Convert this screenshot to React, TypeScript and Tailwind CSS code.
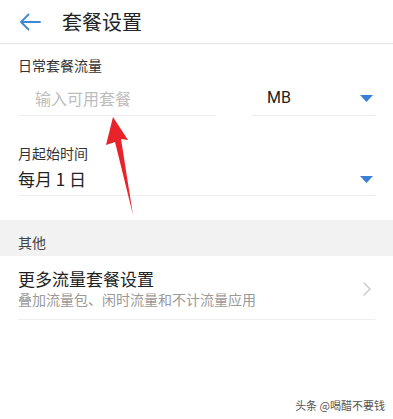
import React from "react";

const font = { fontFamily: '"Noto Sans CJK SC", "Noto Sans", sans-serif' };

export default function App() {
  return (
    <div className="relative w-[393px] h-[419px] bg-white overflow-hidden" style={font}>
      {/* Header */}
      <div className="h-[44px] flex items-center border-b border-[#e6e6e6]">
        <svg width="22" height="18" viewBox="0 0 22 18" className="ml-[19px]" fill="none">
          <path d="M21 9H2M9.5 1.5L2 9l7.5 7.5" stroke="#3f86d8" strokeWidth="1.8" strokeLinecap="round" strokeLinejoin="round" />
        </svg>
        <div className="ml-[21px] text-[20px] leading-[28px] text-[#222]">套餐设置</div>
      </div>

      {/* Section 1 */}
      <div className="px-[18px] pt-[11px]">
        <div className="h-[20px] text-[14px] leading-[20px] text-[#333]">日常套餐流量</div>
        <div className="flex gap-[36px]">
          <div className="w-[198px] h-[41px] pt-[6px] flex items-center pl-[17px] border-b border-[#eeeeee] text-[16px] text-[#bdbdbd]">
            输入可用套餐
          </div>
          <div className="flex-1 h-[41px] pt-[6px] flex items-center justify-between pl-[15px] pr-[2px] border-b border-[#eeeeee]">
            <span className="text-[16px] text-[#222]" style={{ fontFamily: '"Roboto", "Noto Sans", sans-serif' }}>MB</span>
            <svg width="13" height="7" viewBox="0 0 13 7"><path d="M0 0h13L6.5 7z" fill="#3a7fd5" /></svg>
          </div>
        </div>

        <div className="mt-[27px] h-[20px] text-[14px] leading-[20px] text-[#333]">月起始时间</div>
        <div className="h-[33px] flex items-center justify-between pr-[2px] border-b border-[#eeeeee]">
          <span className="text-[17px] text-[#222]">每月 1 日</span>
          <svg width="13" height="7" viewBox="0 0 13 7"><path d="M0 0h13L6.5 7z" fill="#3a7fd5" /></svg>
        </div>
      </div>

      {/* Gray section */}
      <div className="mt-[24px] h-[36px] bg-[#f2f2f2] flex items-center pt-[8px] px-[18px] text-[14px] text-[#444]">
        其他
      </div>

      {/* Item */}
      <div className="mx-[18px] pt-[12px] pb-[10px] border-b border-[#eeeeee] flex items-center justify-between">
        <div>
          <div className="text-[17px] leading-[22px] text-[#222]">更多流量套餐设置</div>
          <div className="text-[14px] leading-[19px] text-[#9a9a9a]">叠加流量包、闲时流量和不计流量应用</div>
        </div>
        <svg width="8" height="14" viewBox="0 0 8 14" className="mr-[4px]" fill="none">
          <path d="M1 1l6 6-6 6" stroke="#c8c8c8" strokeWidth="1.4" strokeLinecap="round" strokeLinejoin="round" />
        </svg>
      </div>

      {/* Red arrow annotation */}
      <svg className="absolute left-0 top-0 pointer-events-none" width="393" height="419" viewBox="0 0 393 419">
        <polygon points="113,117 128,140 121,139 133,215 115,142 106,145" fill="#e8242a" />
      </svg>

      {/* Watermark */}
      <div className="absolute right-[8px] bottom-[7px] text-[11px] leading-[14px] text-[#555]">头条 @喝醋不要钱</div>
    </div>
  );
}
